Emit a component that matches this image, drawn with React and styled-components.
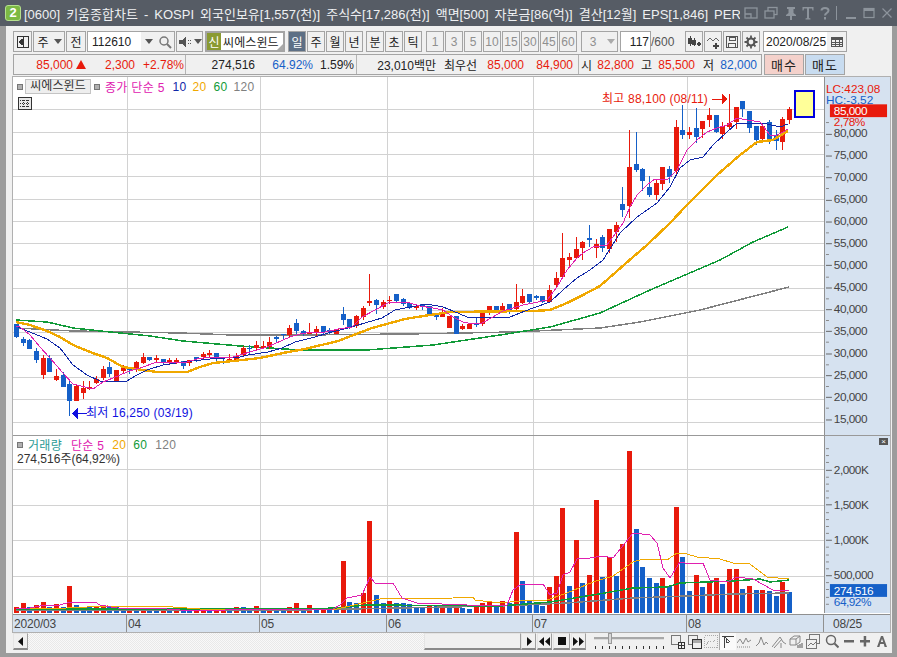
import React from "react";
import styled, { createGlobalStyle } from "styled-components";

const FONT = `"Liberation Sans", "Noto Sans CJK KR", sans-serif`;
const RED = "#e81a0c";
const BLUE = "#1560c8";

const Global = createGlobalStyle`
  html, body { margin: 0; padding: 0; background: #f0f0f0; }
  body { font-family: ${FONT}; font-size: 12px; }
  * { box-sizing: border-box; }
`;

/* ---------- data (pixel positions of the chart, read from the screen) ---------- */
const CANDLES = [
[324,337,324,338,"b"],[339,343,337,346,"b"],[340,349,339,349,"b"],[351,360,348,363,"b"],[358,375,355,379,"r"],[358,372,355,372,"b"],[376,380,369,381,"r"],[375,387,372,387,"b"],
[384,401,381,416,"b"],[386,401,384,401,"r"],[388,393,381,399,"r"],[387,389,381,390,"r"],[379,383,376,384,"r"],[369,378,366,380,"r"],[367,374,362,377,"b"],[370,381,370,381,"r"],
[368,371,365,374,"r"],[369,370,367,374,"b"],[362,370,361,372,"r"],[357,363,353,364,"r"],[357,360,357,361,"b"],[358,360,355,362,"r"],[359,363,359,364,"b"],[360,362,358,364,"r"],
[360,362,358,364,"r"],[361,366,361,369,"b"],[360,363,360,366,"r"],[357,359,357,362,"b"],[354,357,352,359,"r"],[353,355,350,357,"r"],[353,359,353,363,"b"],[361,362,359,364,"b"],
[359,361,354,363,"r"],[356,360,353,362,"r"],[348,355,346,357,"r"],[348,349,345,355,"b"],[345,348,341,350,"r"],[346,348,341,349,"r"],[342,347,337,349,"r"],[337,339,336,342,"b"],
[334,335,334,340,"b"],[328,335,325,337,"r"],[323,331,319,334,"b"],[331,334,330,336,"b"],[332,334,323,334,"r"],[329,333,326,336,"r"],[326,332,326,335,"b"],[330,332,328,334,"b"],
[329,334,329,334,"r"],[314,320,307,325,"b"],[319,328,319,329,"b"],[316,326,315,328,"r"],[308,317,306,320,"r"],[301,303,274,306,"r"],[300,305,299,314,"b"],[302,307,300,309,"r"],
[300,301,296,304,"r"],[294,301,294,302,"b"],[299,304,298,306,"b"],[303,308,303,309,"b"],[306,308,305,310,"r"],[304,307,304,310,"b"],[306,314,306,315,"b"],[313,317,313,320,"b"],
[314,317,308,317,"r"],[316,328,316,328,"r"],[316,334,316,334,"b"],[326,329,324,330,"r"],[324,329,323,329,"r"],[323,325,317,327,"b"],[312,324,312,326,"r"],[306,311,306,315,"r"],
[306,311,306,312,"b"],[306,310,303,311,"r"],[304,312,304,314,"b"],[302,309,284,311,"r"],[296,303,289,304,"r"],[294,302,294,303,"b"],[296,298,295,300,"b"],[296,302,296,303,"b"],
[290,302,285,302,"r"],[278,285,272,288,"r"],[258,277,233,277,"r"],[257,260,253,267,"r"],[249,258,237,259,"r"],[242,248,241,260,"r"],[238,240,225,247,"b"],[244,248,239,258,"r"],
[237,248,235,252,"b"],[229,249,229,253,"r"],[225,232,222,242,"r"],[204,210,187,217,"b"],[167,206,130,218,"r"],[164,170,132,172,"b"],[169,181,168,191,"b"],[187,195,176,197,"b"],
[183,195,180,200,"r"],[167,184,167,190,"r"],[169,177,166,183,"b"],[127,171,120,175,"r"],[130,135,105,139,"b"],[132,135,127,139,"r"],[128,137,108,143,"b"],[121,129,121,138,"r"],
[115,120,108,127,"r"],[115,132,115,133,"b"],[126,134,122,139,"r"],[123,127,95,129,"r"],[107,122,107,129,"r"],[101,109,101,117,"b"],[111,128,111,133,"b"],[126,140,126,145,"b"],
[126,139,125,143,"r"],[122,139,120,144,"b"],[135,141,130,150,"b"],[119,142,117,150,"r"],[109,120,107,124,"r"],
];

const VOLUMES = "607r 603r 607b 605r 602r 607b 604r 607b 586r 605b 607b 607b 607r 605r 607b 607b 610b 608r 609b 609r 609b 609b 609r 611b 608r 610b 610b 609r 609r 610b 609r 609r 609b 607r 607b 609b 606r 609b 609r 609b 609b 607r 603r 609b 605r 610b 608r 609b 609b 561r 602b 603b 593r 521r 595b 603b 601r 603b 603b 604b 607b 608b 605r 606b 605r 606b 605r 608b 609b 607r 603r 602r 607b 601r 603b 532r 581b 601b 603b 606b 587r 576r 508r 586b 540r 583b 575r 500r 577b 557r 576b 544r 451r 529b 567b 578b 583b 578r 586b 507r 557b 591b 575r 587b 581r 578r 584b 569r 569r 589b 586r 590b 590r 591b 596b 582r 592b"
  .split(" ").map((s) => [parseInt(s, 10), s.endsWith("r") ? "r" : "b"]);

const P = (s) => s.trim().split(/\s+/).join(" ");
const MA5 = P(`16,326 20,327 30,335 40,347 50,358 63,373 73,384 93,389 103,382 113,378 127,372 143,367 157,362 170,362 187,362 197,359 210,357 233,357 250,352 267,347 290,337 300,334 312,332 325,332 338,329 352,327 362,317 375,310 388,303 398,302 410,303 420,306 433,308 443,310 453,317 463,322 473,324 482,323 493,317 503,311 513,308 523,305 533,303 547,300 557,287 567,270 577,258 583,253 593,247 607,245 623,223 630,207 637,195 647,185 655,179 668,179 677,170 687,150 697,140 707,132 717,128 727,125 737,118 747,120 760,122 770,135 777,135 783,132 788,129`);
const MA10 = P(`16,326 20,328 47,339 60,348 73,365 87,375 100,381 127,381 137,375 147,370 163,365 183,362 210,359 240,357 248,355 268,352 282,348 295,342 315,337 328,333 348,328 365,323 382,318 395,310 405,308 427,304 443,307 453,311 467,317 477,318 510,317 520,313 533,308 550,302 563,290 577,278 590,270 603,260 620,233 637,217 657,203 670,187 680,168 690,160 703,157 713,145 727,132 737,123 753,123 767,124 780,127 788,124`);
const MA20 = P(`16,322 30,325 47,331 60,337 73,345 90,352 107,358 123,367 143,370 157,372 187,372 200,367 213,363 233,361 260,358 283,353 305,349 338,341 372,328 405,319 417,317 450,312 533,311 550,310 567,303 583,295 600,286 633,257 647,245 670,223 687,205 717,175 740,155 757,142 773,140 788,131`);
const MA60 = P(`16,320 47,322 73,328 110,332 150,336 183,341 240,346 300,350 367,350 433,345 500,335 550,327 600,313 650,290 720,260 753,242 788,227`);
const MA120 = P(`16,328 73,331 127,332 180,333 233,335 300,335 407,334 513,332 600,328 640,322 700,310 789,287`);

const VMA5 = P(`16,609 30,608 40,606 60,605 70,602 95,602 100,605 117,608 167,609 180,610 217,611 233,609 333,609 340,605 347,598 362,595 370,577 375,583 393,583 402,598 417,603 467,605 507,605 513,590 520,585 543,584 550,595 557,593 563,575 570,572 577,559 590,558 603,556 613,558 633,533 650,535 657,543 663,568 670,578 680,562 690,564 703,563 710,580 727,582 737,577 753,579 773,590 789,591`);
const VMA20 = P(`16,609 67,608 107,606 173,607 200,609 337,609 367,602 380,599 453,598 473,597 475,600 500,603 520,601 547,600 567,593 593,582 613,576 633,562 643,559 667,560 677,553 687,554 697,557 720,559 733,563 750,564 767,577 789,579`);
const VMA60 = P(`16,609 300,609 337,608 367,605 500,606 550,602 593,595 633,588 667,587 680,583 733,581 760,579 770,582 789,580`);
const VMA120 = P(`16,610 300,610 500,606 567,603 633,598 687,596 733,594 789,593`);

const cx = (i) => Math.round(16 + (i * 773) / 116);
const priceY = (p) => 310 + ((40000 - p) / 5000) * 22.3;
const PRICES = [80000, 75000, 70000, 65000, 60000, 55000, 50000, 45000, 40000, 35000, 30000, 25000, 20000, 15000];
const VGRID = [127, 260, 387, 533, 687];
const fmt = (n) => n.toLocaleString("en-US");

/* ---------- window shell ---------- */
const Window = styled.div`
  width: 897px; height: 657px; display: flex; flex-direction: column;
  overflow: hidden; background: #f0f0f0; color: #222; font-family: ${FONT}; font-size: 12px;
`;
const TitleBar = styled.header`
  height: 26px; flex: none; display: flex; align-items: center;
  background: #565c65; padding: 0 7px 0 5px;
`;
const Logo = styled.div`
  width: 16px; height: 16px; border-radius: 3px; background: #7cb944; border: 1px solid #b5e08e;
  color: #fff; font: bold 13px/14px "Liberation Sans", sans-serif; text-align: center; flex: none;
`;
const TitleText = styled.div`
  margin-left: 3px; width: 716px; flex: none; white-space: nowrap; overflow: hidden;
  color: #eef0f2; font-size: 13px; word-spacing: 2.4px;
`;
const TitleIcons = styled.div`
  margin-left: 4px; display: flex; align-items: center; flex: 1; color: #8d949c;
`;
const TitleIcon = styled.svg`
  width: 14px; height: 14px; display: block; margin-right: ${(p) => p.$mr ?? 5}px; flex: none;
`;
const Main = styled.main`
  flex: 1; display: flex; flex-direction: column; min-height: 0;
  border-style: solid; border-color: #9c9c9c; border-width: 0 5px 4px 6px;
  padding: 5px 1px 3px 6px;
`;

/* ---------- toolbar ---------- */
const ToolRow = styled.div`
  height: 21px; flex: none; display: flex; align-items: stretch; padding-left: 1px;
`;
const Group = styled.div`
  display: flex; gap: 1px; margin-left: ${(p) => p.$ml ?? 0}px; flex: none;
`;
const ToolButton = styled.div`
  width: ${(p) => p.$w ?? 18}px; display: flex; align-items: center; justify-content: center;
  border: 1px solid #a4a4a4; flex: none;
  background: ${(p) => (p.$active ? "#5d6f85" : "#f0f0f0")};
  color: ${(p) => (p.$active ? "#fff" : p.$muted ? "#8f8f8f" : "#222")};
  font-size: 12px;
`;
const Combo = styled.div`
  width: ${(p) => p.$w}px; margin-left: ${(p) => p.$ml ?? 0}px; display: flex; border: 1px solid #a4a4a4; background: #f0f0f0; flex: none;
`;
const ComboField = styled.div`
  flex: 1; display: flex; align-items: center; justify-content: ${(p) => p.$align ?? "center"};
  padding-left: ${(p) => p.$pad ?? 0}px;
  background: ${(p) => (p.$white ? "#fff" : "transparent")}; color: ${(p) => (p.$muted ? "#8f8f8f" : "#222")};
  min-width: 0;
`;
const ComboCell = styled.div`
  width: ${(p) => p.$w ?? 12}px; display: flex; align-items: center; justify-content: center; flex: none;
`;
const Arrow = styled.span`
  width: 0; height: 0; border-left: 4px solid transparent; border-right: 4px solid transparent;
  border-top: 5px solid ${(p) => p.$color ?? "#555"};
`;
const StockBox = styled.div`
  width: 80px; display: flex; align-items: center; border: 2px solid #a4a4a4; background: #fff; position: relative; flex: none;
`;
const NewBadge = styled.div`
  width: 14px; height: 17px; background: #8a9a32; color: #fff; display: flex; align-items: center; justify-content: center; flex: none; font-size: 12px;
`;
const StockName = styled.div`
  margin-left: 2px; white-space: nowrap; font-size: 12px; letter-spacing: 0.1px; overflow: hidden;
`;
const Corner = styled.span`
  position: absolute; right: 0; bottom: 0; width: 0; height: 0;
  border-left: 6px solid transparent; border-bottom: 6px solid #a9a9a9;
`;
const Counter = styled.div`
  width: 31px; border: 1px solid #a4a4a4; background: #fff; display: flex; align-items: center; justify-content: flex-end; padding-right: 1px; flex: none;
`;
const CounterTotal = styled.div`
  width: 30px; display: flex; align-items: center; color: #555; flex: none; margin-left: -1px;
`;

/* ---------- info row ---------- */
const InfoRow = styled.div`
  height: 21px; margin-top: 2px; flex: none; display: flex; padding-left: 1px;
`;
const InfoBox = styled.div`
  width: 749px; display: flex; border: 1px solid #a4a4a4; flex: none;
`;
const Segment = styled.div`
  display: flex; align-items: center; flex: none; width: ${(p) => p.$w}px;
  border-right: ${(p) => (p.$last ? "none" : "1px solid #b4b4b4")};
`;
const Cell = styled.span`
  width: ${(p) => p.$w}px; text-align: right; white-space: nowrap; flex: none;
  color: ${(p) => p.$c ?? "#222"};
`;
const UpMark = styled.span`
  width: 0; height: 0; margin-left: 3px; margin-right: 2px; flex: none;
  border-left: 5px solid transparent; border-right: 5px solid transparent; border-bottom: 9px solid ${RED};
`;
const TradeButton = styled.div`
  width: 40px; margin-left: ${(p) => p.$ml}px; display: flex; align-items: center; justify-content: center;
  border: 1px solid #a4a4a4; background: ${(p) => p.$bg}; font-size: 13px; letter-spacing: 1px; flex: none;
`;

/* ---------- chart ---------- */
const ChartPanel = styled.section`
  height: 557px; margin-top: 1px; flex: none; display: flex; flex-direction: column;
  border: 1px solid #b0b0b0; background: #fff;
`;
const Pane = styled.div`
  height: ${(p) => p.$h}px; flex: none; display: grid; grid-template-columns: 811px 66px; position: relative;
  border-bottom: ${(p) => (p.$line ? "1px solid #999" : "none")};
`;
const PlotSvg = styled.svg`
  display: block; background: #fff; overflow: hidden;
`;
const AxisSvg = styled.svg`
  display: block; background: #d6e2f0; border-left: 1px solid #909090; overflow: hidden;
  font-family: ${FONT}; font-size: 12px; letter-spacing: -0.5px;
`;
const Legend = styled.div`
  position: absolute; left: ${(p) => p.$x}px; top: ${(p) => p.$y}px; display: flex; align-items: center; white-space: nowrap;
`;
const Sq = styled.span`
  width: 6px; height: 6px; background: #b0b0b0; border: 1px solid #777; flex: none; margin-right: ${(p) => p.$mr ?? 2}px;
`;
const NameTag = styled.span`
  width: 66px; height: 15px; line-height: 13px; text-align: center; background: #eeeeee; border: 1px solid #c4c4c4; color: #333; margin-right: 3px; letter-spacing: 0.1px;
`;
const LegendItem = styled.span`
  color: ${(p) => p.$c}; margin-left: ${(p) => p.$ml ?? 0}px; letter-spacing: 0.3px;
`;
const GridIcon = styled.svg`
  position: absolute; left: 5px; top: 20px; width: 14px; height: 13px;
`;
const Readout = styled.div`
  position: absolute; left: 4px; top: 13px; color: #333; white-space: nowrap;
`;
const CloseBox = styled.div`
  position: absolute; right: 2px; top: 2px; width: 9px; height: 7px; background: #555; color: #fff;
  font-size: 8px; line-height: 7px; text-align: center;
`;
const TimeAxis = styled.div`
  height: 18px; flex: none; display: grid; grid-template-columns: 114px 133px 127px 146px 154px 137px 66px;
  background: #d6e2f0; border-top: 1px solid #909090; color: #444; letter-spacing: -0.2px;
`;
const TimeCell = styled.div`
  display: flex; align-items: center; border-right: ${(p) => (p.$last ? "none" : "1px solid #909090")};
  padding-left: ${(p) => (p.$last ? 9 : 1)}px;
`;

/* ---------- bottom bar ---------- */
const BottomBar = styled.footer`
  height: 17px; flex: none; display: flex; align-items: stretch; padding-left: 1px;
`;
const RaisedButton = styled.div`
  width: ${(p) => p.$w ?? 15}px; flex: none; display: flex; align-items: center; justify-content: center;
  background: #f0f0f0; border: 1px solid #e4e4e4; border-bottom: 2px solid #8a8a8a; border-right: 1px solid #a0a0a0;
  margin-right: ${(p) => p.$mr ?? 0}px;
`;
const Track = styled.div`
  width: 396px; flex: none; background: #f7f7f7 repeating-conic-gradient(#e9e9e9 0% 25%, #f9f9f9 0% 50%) 0 0 / 2px 2px;
`;
const Thumb = styled.div`
  width: 97px; flex: none; background: #f0f0f0; border: 1px solid #e4e4e4; border-bottom: 2px solid #8a8a8a; border-right: 1px solid #a0a0a0;
`;
const Slider = styled.div`
  width: 70px; margin-left: 8px; flex: none; position: relative;
`;
const SliderRail = styled.div`
  position: absolute; left: 0; right: 0; top: 4px; height: 3px; background: #a8a8a8; border-bottom: 1px solid #ddd;
`;
const SliderKnob = styled.div`
  position: absolute; left: 14px; top: 0; width: 4px; height: 11px; background: #d8d8d8; border: 1px solid #999;
`;
const SliderTicks = styled.div`
  position: absolute; left: 1px; right: 0; bottom: 1px; height: 3px; display: flex; justify-content: space-between;
`;
const SliderTick = styled.span`
  width: 1px; height: 3px; background: #333;
`;
const BarIcons = styled.div`
  margin-left: 7px; flex: 1; display: flex; align-items: center; color: #777;
`;
const BarIcon = styled.svg`
  width: ${(p) => p.$w ?? 14}px; height: 15px; display: block; flex: none; margin-right: ${(p) => p.$mr ?? 2}px;
`;
const ActiveSlot = styled.div`
  width: 17px; height: 17px; background: #fafafa; border-left: 1px solid #aaa; display: flex; align-items: center; justify-content: center; margin-right: 1px; flex: none;
`;

const I = ({ children, size = 14, ...p }) => (
  <svg width={size} height={size} viewBox="0 0 14 14" fill="none" stroke="currentColor" shapeRendering="crispEdges" style={{ display: "block" }} {...p}>
    {children}
  </svg>
);

const Candles = () => (
  <g shapeRendering="crispEdges">
    {CANDLES.map(([t, b, wt, wb, c], i) => {
      const x = cx(i);
      const col = c === "r" ? RED : BLUE;
      return (
        <g key={i} fill={col}>
          <rect x={x} y={wt} width={1} height={wb - wt} />
          <rect x={x - 2} y={t} width={5} height={Math.max(b - t, 1)} />
        </g>
      );
    })}
  </g>
);

const Line = ({ points, c, w = 1 }) => (
  <polyline points={points} fill="none" stroke={c} strokeWidth={w} shapeRendering="crispEdges" />
);

const VLines = ({ y1, y2 }) => VGRID.map((x) => <rect key={x} x={x} y={y1} width={1} height={y2 - y1} fill="#d2d2d2" />);

const PricePlot = () => (
  <PlotSvg width="811" height="358" viewBox="13 77 811 358">
    <VLines y1={77} y2={435} />
    {[85000, ...PRICES].map((p) => (
      <rect key={p} x={13} y={Math.round(priceY(p))} width={811} height={1} fill="#d2d2d2" />
    ))}
    <Line points={MA120} c="#808080" w={1.5} />
    <Line points={MA60} c="#109a38" w={1.5} />
    <Candles />
    <Line points={MA20} c="#f0a800" w={2.4} />
    <Line points={MA10} c="#1028a8" />
    <Line points={MA5} c="#e020b0" />
    <text x={602} y={103} fill={RED} fontSize="12" fontFamily={FONT} letterSpacing="0.2">최고 88,100 (08/11)</text>
    <g stroke={RED} fill={RED} shapeRendering="crispEdges">
      <line x1={712} y1={99} x2={722} y2={99} />
      <polygon points="722,94 728,99 722,104" stroke="none" />
      <line x1={729} y1={94} x2={729} y2={104} />
    </g>
    <text x={86} y={417} fill="#1010e0" fontSize="12" fontFamily={FONT} letterSpacing="0.2">최저 16,250 (03/19)</text>
    <g fill="#1010e0" shapeRendering="crispEdges">
      <rect x={77} y={413} width={10} height={1} />
      <polygon points="72,413.5 78,408 78,419" />
    </g>
    <rect x={795} y={91} width={19} height={26} fill="#ffff99" stroke="#0000e0" strokeWidth="2" shapeRendering="crispEdges" />
  </PlotSvg>
);

const PriceAxis = () => {
  const minor = [];
  for (let p = 17500; p < 85000; p += 5000) minor.push(p);
  return (
    <AxisSvg width="66" height="358" viewBox="824 77 66 358">
      {PRICES.map((p) => (
        <g key={p}>
          <rect x={825} y={Math.round(priceY(p))} width={6} height={1} fill="#666" />
          <text x={833} y={priceY(p) + 4} fill="#444">{fmt(p)}</text>
        </g>
      ))}
      {minor.map((p) => <rect key={p} x={825} y={Math.round(priceY(p))} width={3} height={1} fill="#888" />)}
      <text x={825} y={90} fill={RED} letterSpacing="0">LC:423,08</text>
      <text x={825} y={102} fill={BLUE} letterSpacing="0">HC:-3,52</text>
      <text x={833} y={124} fill={RED}>2,78%</text>
      <rect x={829} y={102} width={58} height={13} fill={RED} />
      <text x={833} y={113} fill="#fff">85,000</text>
    </AxisSvg>
  );
};

const VolumePlot = () => (
  <PlotSvg width="811" height="177" viewBox="13 436 811 177">
    <VLines y1={436} y2={613} />
    {[469, 505, 540, 576].map((y) => <rect key={y} x={13} y={y} width={811} height={1} fill="#d2d2d2" />)}
    <g shapeRendering="crispEdges">
      {VOLUMES.map(([t, c], i) => (
        <rect key={i} x={cx(i) - 2} y={t} width={5} height={613 - t} fill={c === "r" ? RED : BLUE} />
      ))}
    </g>
    <Line points={VMA120} c="#808080" w={1.5} />
    <Line points={VMA60} c="#109a38" w={1.5} />
    <Line points={VMA20} c="#f0a800" />
    <Line points={VMA5} c="#e020b0" />
  </PlotSvg>
);

const VolumeAxis = () => {
  const ticks = [];
  for (let v = 100; v <= 2300; v += 100) ticks.push(v);
  return (
    <AxisSvg width="66" height="177" viewBox="824 436 66 177">
      {ticks.map((v) => (
        <rect key={v} x={825} y={Math.round(612 - v * 0.0717)} width={v % 500 === 0 ? 6 : 3} height={1} fill={v % 500 === 0 ? "#666" : "#888"} />
      ))}
      {[[469, "2,000K"], [505, "1,500K"], [540, "1,000K"], [576, "500,000"]].map(([y, t]) => (
        <text key={t} x={833} y={y + 4} fill="#444">{t}</text>
      ))}
      <rect x={829} y={585} width={58} height={13} fill={BLUE} />
      <text x={833} y={596} fill="#fff">274,516</text>
      <text x={833} y={607} fill={BLUE}>64,92%</text>
    </AxisSvg>
  );
};

export default function App() {
  return (
    <Window>
      <Global />
      <TitleBar>
        <Logo>2</Logo>
        <TitleText>[0600] 키움종합차트 - KOSPI 외국인보유[1,557(천)] 주식수[17,286(천)] 액면[500] 자본금[86(억)] 결산[12월] EPS[1,846] PER</TitleText>
        <TitleIcons>
          <TitleIcon viewBox="0 0 14 14" fill="none" stroke="currentColor" strokeWidth="1.3" $mr={6}><rect x="1" y="2" width="12" height="10" /><path d="M1 8h6v4M7 8" /></TitleIcon>
          <TitleIcon viewBox="0 0 14 14" fill="none" stroke="currentColor" strokeWidth="1.3" $mr={6}><rect x="4" y="1.5" width="9" height="7" /><rect x="1" y="5" width="9" height="7" fill="#565c65" /></TitleIcon>
          <TitleIcon viewBox="0 0 14 14" fill="currentColor" $mr={3}><path d="M3 1h8v2H9.500v4L12 9v1H8v4H6v-4H2V9l2.500-2V3H3z" /></TitleIcon>
          <TitleIcon viewBox="0 0 14 14" fill="currentColor" $mr={3}><path d="M1.500 1h11v3.500h-1L11 2.500H8V12l1.500.6v.9h-5v-.9L6 12V2.500H3l-.500 2h-1z" /></TitleIcon>
          <TitleIcon viewBox="0 0 14 14" fill="none" stroke="currentColor" strokeWidth="2" $mr={4}><path d="M3.500 4.500C3.500 1 10.500 1 10.500 4.500 10.500 7 7 7 7 9.500" /><path d="M7 11v2.500" /></TitleIcon>
          <TitleIcon viewBox="0 0 2 14" $mr={6} style={{ width: 2 }}><rect x="0" y="0" width="1" height="14" fill="currentColor" /></TitleIcon>
          <TitleIcon viewBox="0 0 14 14" $mr={4}><rect x="2" y="11" width="10" height="2" fill="currentColor" /></TitleIcon>
          <TitleIcon viewBox="0 0 14 14" fill="none" stroke="currentColor" strokeWidth="1.2" $mr={4}><rect x="2" y="2.500" width="10" height="9" /><path d="M2 4h10" strokeWidth="2" /></TitleIcon>
          <TitleIcon viewBox="0 0 14 14" fill="none" stroke="currentColor" strokeWidth="1.2" $mr={0}><path d="M2.500 2.500l9 9M11.500 2.500l-9 9" /></TitleIcon>
        </TitleIcons>
      </TitleBar>
      <Main>
        <ToolRow>
          <Group>
            <ToolButton $w={19}>
              <I><rect x="1.500" y="1.500" width="11" height="11" stroke="#333" /><path d="M7.500 2v10" stroke="#333" /><path d="M7 4 L3 7 L7 10z" fill="#333" stroke="#333" /></I>
            </ToolButton>
            <Combo $w={32}><ComboField>주</ComboField><ComboCell $w={12}><Arrow /></ComboCell></Combo>
            <ToolButton $w={20}>전</ToolButton>
            <Combo $w={88}>
              <ComboField $white $align="flex-start" $pad={4}>112610</ComboField>
              <ComboCell $w={15}><Arrow /></ComboCell>
              <ComboCell $w={18}>
                <I color="#777"><circle cx="6" cy="6" r="4" strokeWidth="1.500" shapeRendering="auto" /><path d="M9 9l4 4" strokeWidth="2" shapeRendering="auto" /></I>
              </ComboCell>
            </Combo>
            <Combo $w={27}>
              <ComboCell $w={16}>
                <I color="#555"><path d="M1 5h3l4-3v10L4 9H1z" fill="currentColor" stroke="none" /><path d="M10 5v1M10 8v1M12 5v1M12 8v1" /></I>
              </ComboCell>
              <ComboCell $w={9}><Arrow /></ComboCell>
            </Combo>
          </Group>
          <Group $ml={2}>
            <StockBox><NewBadge>신</NewBadge><StockName>씨에스윈드</StockName><Corner /></StockBox>
          </Group>
          <Group $ml={3}>
            <ToolButton $active>일</ToolButton><ToolButton>주</ToolButton><ToolButton>월</ToolButton><ToolButton>년</ToolButton>
          </Group>
          <Group $ml={3}>
            <ToolButton>분</ToolButton><ToolButton>초</ToolButton><ToolButton>틱</ToolButton>
          </Group>
          <Group $ml={4}>
            {[1, 3, 5, 10, 15, 30, 45, 60].map((n) => <ToolButton key={n} $muted>{n}</ToolButton>)}
          </Group>
          <Combo $w={37} $ml={4}><ComboField $muted>3</ComboField><ComboCell $w={13}><Arrow $color="#aaa" /></ComboCell></Combo>
          <Group $ml={2}><Counter>117</Counter><CounterTotal>/600</CounterTotal></Group>
          <Group $ml={4}>
            <ToolButton>
              <I color="#444"><path d="M3 1v10M7 3v8" /><rect x="1.500" y="3" width="3" height="5" fill="#444" /><rect x="5.500" y="5" width="3" height="4" fill="#444" /><path d="M10 9h4M12 7v4" strokeWidth="2" /></I>
            </ToolButton>
            <ToolButton>
              <I color="#666"><path d="M1 6l3-3 3 3 3-3 3 3" shapeRendering="auto" /><path d="M7 11h6M10 8v6" strokeWidth="2" color="#444" /></I>
            </ToolButton>
            <ToolButton>
              <I color="#555"><rect x="1.500" y="1.500" width="11" height="11" strokeWidth="1" /><rect x="4" y="2" width="6" height="3" strokeWidth="1" /><rect x="3.500" y="8" width="7" height="4" strokeWidth="1" /></I>
            </ToolButton>
            <ToolButton>
              <I color="#555"><circle cx="7" cy="7" r="3.500" strokeWidth="2.200" shapeRendering="auto" /><path d="M7 0.500v2.500M7 11v2.500M0.500 7h2.500M11 7h2.500M2.500 2.500l1.800 1.800M9.700 9.700l1.800 1.800M11.500 2.500L9.700 4.300M4.300 9.700l-1.800 1.800" strokeWidth="1.800" shapeRendering="auto" /></I>
            </ToolButton>
          </Group>
          <Combo $w={84} $ml={3}>
            <ComboField $white $align="flex-start" $pad={2}>2020/08/25</ComboField>
            <ComboCell $w={19}>
              <I color="#555"><rect x="1.500" y="2.500" width="11" height="9" /><path d="M2 4h10" strokeWidth="2" /><path d="M1.500 7h11M1.500 9h11M5 5v6M9 5v6" strokeWidth="1" /></I>
            </ComboCell>
          </Combo>
        </ToolRow>

        <InfoRow>
          <InfoBox>
            <Segment $w={172}>
              <Cell $w={59} $c={RED}>85,000</Cell>
              <UpMark />
              <Cell $w={47} $c={RED}>2,300</Cell>
              <Cell $w={49} $c={RED}>+2.78%</Cell>
            </Segment>
            <Segment $w={171}>
              <Cell $w={69}>274,516</Cell>
              <Cell $w={58} $c={BLUE}>64.92%</Cell>
              <Cell $w={41}>1.59%</Cell>
            </Segment>
            <Segment $w={222}>
              <Cell $w={79}>23,010백만</Cell>
              <Cell $w={41}>최우선</Cell>
              <Cell $w={47} $c={RED}>85,000</Cell>
              <Cell $w={49} $c={RED}>84,900</Cell>
            </Segment>
            <Segment $w={182} $last>
              <Cell $w={13}>시</Cell>
              <Cell $w={42} $c={RED}>82,800</Cell>
              <Cell $w={18}>고</Cell>
              <Cell $w={43} $c={RED}>85,500</Cell>
              <Cell $w={19}>저</Cell>
              <Cell $w={43} $c={BLUE}>82,000</Cell>
            </Segment>
          </InfoBox>
          <TradeButton $ml={2} $bg="#f4d1cb">매수</TradeButton>
          <TradeButton $ml={1} $bg="#c8dcf0">매도</TradeButton>
        </InfoRow>

        <ChartPanel>
          <Pane $h={359} $line>
            <PricePlot />
            <PriceAxis />
            <Legend $x={4} $y={1}>
              <Sq /><NameTag>씨에스윈드</NameTag><Sq $mr={5} />
              <LegendItem $c="#e020b0">종가 단순 5</LegendItem>
              <LegendItem $c="#1028a8" $ml={8}>10</LegendItem>
              <LegendItem $c="#f0a800" $ml={6}>20</LegendItem>
              <LegendItem $c="#109a38" $ml={7}>60</LegendItem>
              <LegendItem $c="#808080" $ml={6}>120</LegendItem>
            </Legend>
            <GridIcon viewBox="0 0 14 13" fill="none" stroke="#333" shapeRendering="crispEdges">
              <rect x="0.500" y="0.500" width="13" height="12" fill="#e8e8e8" />
              <path d="M2 3h10M2 6h10M2 9h10M5 3v7M9 3v7" strokeDasharray="1 1" />
            </GridIcon>
          </Pane>
          <Pane $h={178}>
            <VolumePlot />
            <VolumeAxis />
            <Legend $x={4} $y={0}>
              <Sq $mr={5} />
              <LegendItem $c="#2a9a94">거래량</LegendItem>
              <LegendItem $c="#e020b0" $ml={9}>단순 5</LegendItem>
              <LegendItem $c="#f0a800" $ml={8}>20</LegendItem>
              <LegendItem $c="#109a38" $ml={7}>60</LegendItem>
              <LegendItem $c="#808080" $ml={8}>120</LegendItem>
            </Legend>
            <Readout>274,516주(64,92%)</Readout>
            <CloseBox>×</CloseBox>
          </Pane>
          <TimeAxis>
            <TimeCell>2020/03</TimeCell><TimeCell>04</TimeCell><TimeCell>05</TimeCell><TimeCell>06</TimeCell><TimeCell>07</TimeCell><TimeCell>08</TimeCell><TimeCell $last>08/25</TimeCell>
          </TimeAxis>
        </ChartPanel>

        <BottomBar>
          <RaisedButton><svg width="6" height="9" viewBox="0 0 6 9"><path d="M5 0v9L0 4.500z" fill="#111" /></svg></RaisedButton>
          <Track />
          <Thumb />
          <RaisedButton $mr={1}><svg width="6" height="9" viewBox="0 0 6 9"><path d="M1 0v9l5-4.500z" fill="#111" /></svg></RaisedButton>
          <RaisedButton $mr={1}><svg width="11" height="9" viewBox="0 0 11 9"><path d="M5 0v9L0 4.500zM11 0v9L6 4.500z" fill="#111" /></svg></RaisedButton>
          <RaisedButton $w={17} $mr={1}><svg width="8" height="8" viewBox="0 0 8 8"><rect width="8" height="8" fill="#111" /></svg></RaisedButton>
          <RaisedButton><svg width="11" height="9" viewBox="0 0 11 9"><path d="M0 0v9l5-4.500zM6 0v9l5-4.500z" fill="#111" /></svg></RaisedButton>
          <Slider>
            <SliderRail /><SliderKnob />
            <SliderTicks>{Array.from({ length: 11 }, (_, i) => <SliderTick key={i} />)}</SliderTicks>
          </Slider>
          <BarIcons>
            <BarIcon viewBox="0 0 14 15" fill="none" stroke="currentColor" shapeRendering="crispEdges" $mr={3}><rect x="0.500" y="1.500" width="9" height="9" /><rect x="7.500" y="8.500" width="6" height="6" fill="#f0f0f0" stroke="#333" /><path d="M10.500 9v5M8 11.500h5" stroke="#333" /></BarIcon>
            <BarIcon viewBox="0 0 14 15" fill="none" stroke="currentColor" shapeRendering="crispEdges" $mr={2}><rect x="0.500" y="1.500" width="9" height="9" /><rect x="4.500" y="5.500" width="9" height="9" fill="#f0f0f0" stroke="#333" /><rect x="5" y="6" width="8" height="3" fill="#aaa" stroke="none" /></BarIcon>
            <BarIcon viewBox="0 0 14 15" fill="none" stroke="#aaa" strokeDasharray="1 1" shapeRendering="crispEdges" $mr={1}><rect x="0.500" y="1.500" width="13" height="12" /><path d="M2 11l3-4 3 2 4-4" /></BarIcon>
            <ActiveSlot>
              <I color="#444"><path d="M1 1h12M3 1v12M4 2l5 5M8 7h-3v-3" /></I>
            </ActiveSlot>
            <BarIcon viewBox="0 0 14 15" fill="none" stroke="#888" $mr={5}><path d="M0 9l3-4 3 5 3-6 2 4 3-2" /><path d="M0 13h14" strokeDasharray="1 1" /></BarIcon>
            <BarIcon viewBox="0 0 12 15" $w={12} fill="none" stroke="#888" $mr={4}><path d="M0 12l3-3 2-6 3 8 2-3 2 2" /></BarIcon>
            <BarIcon viewBox="0 0 14 15" fill="none" stroke="#888" $mr={3}><path d="M0 13L8 3l3 5 3 2" /><path d="M2 14l8-9M9 9v5" /></BarIcon>
            <BarIcon viewBox="0 0 14 15" fill="none" stroke="#888" $mr={3}><path d="M1 5l4-3h6v6l-4 3H1z" /><path d="M1 5h6v6M7 5l4-3" /><path d="M9 14v-3M11 14v-4M13 14V9" stroke="#555" /></BarIcon>
            <BarIcon viewBox="0 0 14 15" fill="none" stroke="#777" $mr={5}><rect x="3.500" y="0.500" width="10" height="9" /><rect x="0.500" y="5.500" width="10" height="9" fill="#f0f0f0" /><path d="M2 12l3-3 2 2 3-3" /></BarIcon>
            <BarIcon viewBox="0 0 14 15" fill="none" stroke="#666" $mr={3}><circle cx="6" cy="6" r="4.500" strokeWidth="1.500" /><path d="M9.500 9.500l4 4" strokeWidth="2" /></BarIcon>
            <BarIcon viewBox="0 0 14 15" $mr={2}><rect x="2" y="6" width="10" height="2.500" fill="#666" /></BarIcon>
            <BarIcon viewBox="0 0 14 15" $mr={3}><rect x="2" y="6" width="10" height="2.500" fill="#666" /><rect x="5.700" y="2" width="2.500" height="10.500" fill="#666" /></BarIcon>
            <BarIcon viewBox="0 0 14 15" $mr={0}><path d="M2 13L6 2h2l4 11h-2.400L8.800 10H5.200l-.800 3zM5.900 8h2.200L7 4.700z" fill="#666" /></BarIcon>
          </BarIcons>
        </BottomBar>
      </Main>
    </Window>
  );
}
